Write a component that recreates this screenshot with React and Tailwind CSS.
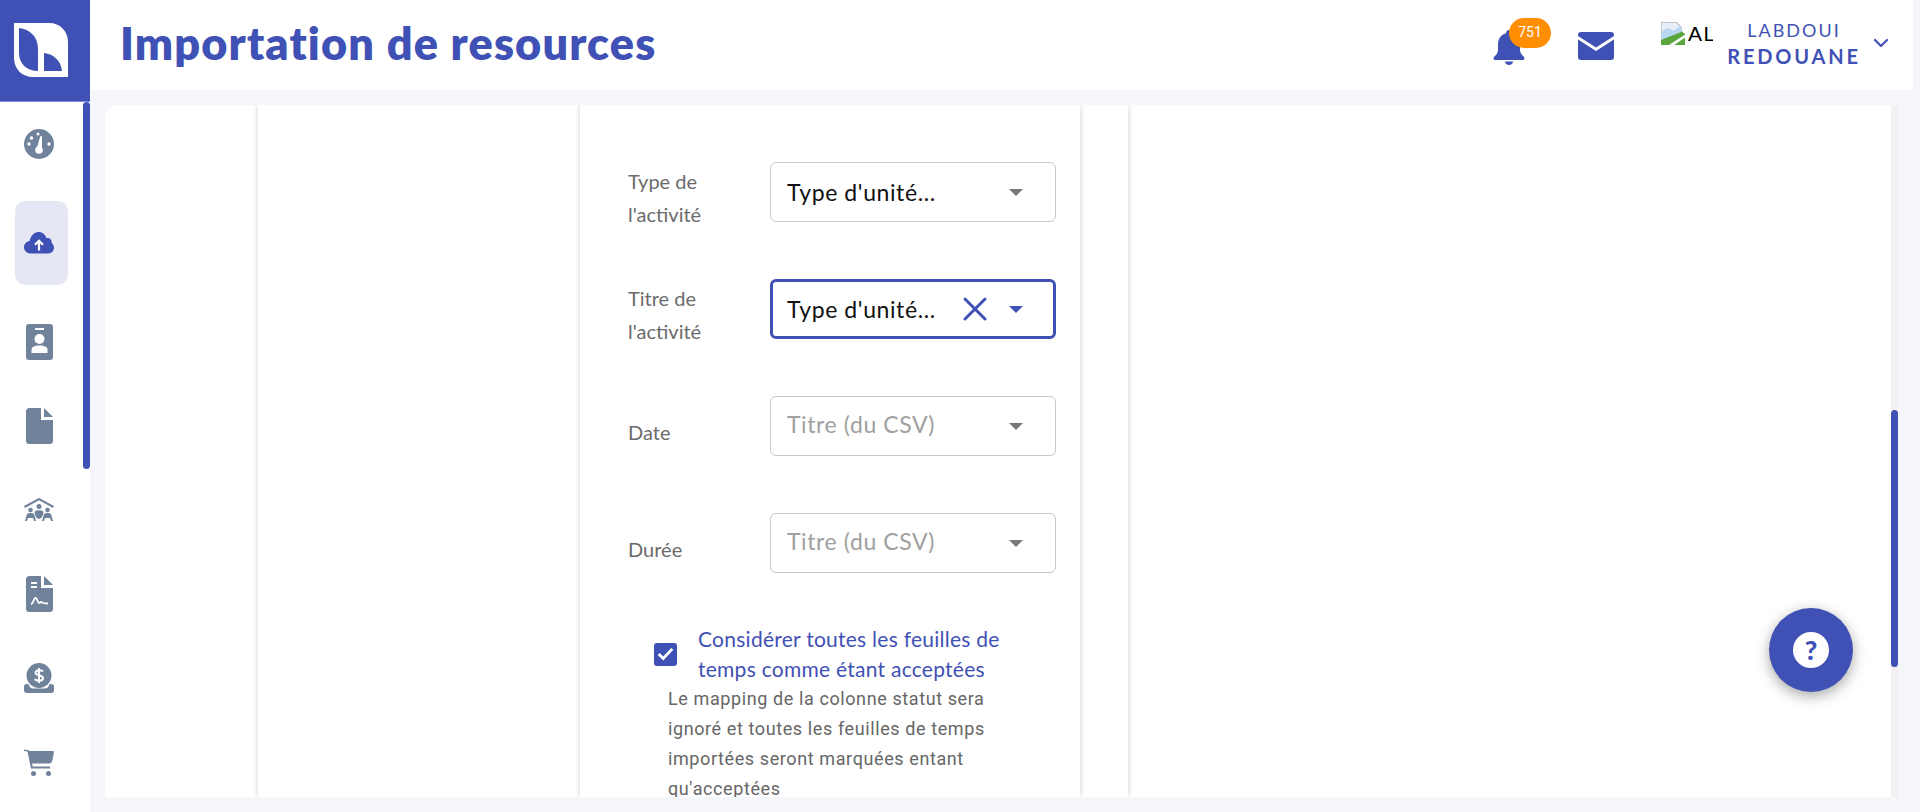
import { X, ChevronDown } from "lucide-react";

const Logo = () => (
  <svg width="54" height="54" viewBox="0 0 54 54">
    <path d="M0 0H35C46 0 54 8 54 19V54H19C8 54 0 46 0 35Z" fill="#fff" />
    <path d="M5 5C16 6 24 14 24 26V48C13 48 5 41 5 30Z" fill="#3f51b5" />
    <path d="M30 30C40 31 47 38 48 48H30Z" fill="#3f51b5" />
  </svg>
);

const GaugeIcon = () => (
  <svg width="30" height="30" viewBox="0 0 30 30">
    <circle cx="15" cy="15" r="15" fill="currentColor" />
    <circle cx="15" cy="21" r="3.800" fill="#fff" />
    <path d="M12.500 20L16.400 7L18 7.500L18 21Z" fill="#fff" />
    <circle cx="5" cy="15" r="1.700" fill="#fff" />
    <circle cx="7.500" cy="9" r="1.700" fill="#fff" />
    <circle cx="14" cy="5" r="1.500" fill="#fff" />
    <circle cx="25" cy="15" r="1.700" fill="#fff" />
  </svg>
);

const CloudIcon = () => (
  <svg width="30" height="22" viewBox="0 0 30 22">
    <path d="M7 21.500C3 21.500 0 18.800 0 15.200C0 12 2.400 9.400 5.600 9C6.600 4 10 0 14.500 0C18.500 0 21.500 2.600 22.600 6.200C23 6.100 23.400 6 24 6C26.800 6.400 28 8.600 27.600 11C29 12 30 13.600 30 15.600C30 19 27.600 21.500 24 21.500Z" fill="currentColor" />
    <path d="M15 18.500V9.500M11 12.800L15 8.800L19 12.800" stroke="#fff" strokeWidth="2.200" fill="none" />
  </svg>
);

const BadgeIcon = () => (
  <svg width="27" height="36" viewBox="0 0 27 36">
    <rect width="27" height="36" rx="3" fill="currentColor" />
    <rect x="9" y="4" width="9" height="2" fill="#fff" />
    <circle cx="13.500" cy="15" r="5" fill="#fff" />
    <path d="M5.500 29V26C5.500 23 8 21.500 13.500 21.500C19 21.500 21.500 23 21.500 26V29Z" fill="#fff" />
  </svg>
);

const FileIcon = () => (
  <svg width="27" height="36" viewBox="0 0 27 36">
    <path d="M3 0H15V12H27V33C27 35 25.500 36 24 36H3C1.500 36 0 35 0 33V3C0 1.500 1.500 0 3 0Z" fill="currentColor" />
    <path d="M18 0L27 9H18Z" fill="currentColor" />
  </svg>
);

const TeamIcon = () => (
  <svg width="30" height="24" viewBox="0 0 30 24">
    <path d="M0.500 9L15 1L29.500 9" stroke="currentColor" strokeWidth="2" fill="none" />
    <circle cx="15" cy="8.500" r="2.500" fill="currentColor" />
    <circle cx="6.500" cy="12" r="2.300" fill="currentColor" />
    <circle cx="23.500" cy="12" r="2.300" fill="currentColor" />
    <path d="M1 23L3 16C4 14.500 9 14.500 10 16L12 23H10L9 20H4L3 23Z" fill="currentColor" />
    <path d="M18 23L20 16C21 14.500 26 14.500 27 16L29 23H27L26 20H21L20 23Z" fill="currentColor" />
    <path d="M10.500 14C11 11.500 19 11.500 19.500 14C19 17 18.500 20 15 21C11.500 20 11 17 10.500 14Z" fill="currentColor" />
  </svg>
);

const ContractIcon = () => (
  <svg width="27" height="36" viewBox="0 0 27 36">
    <path d="M3 0H15V12H27V33C27 35 25.500 36 24 36H3C1.500 36 0 35 0 33V3C0 1.500 1.500 0 3 0Z" fill="currentColor" />
    <path d="M18 0L27 9H18Z" fill="currentColor" />
    <rect x="5" y="6" width="6" height="2" fill="#fff" />
    <rect x="5" y="10" width="6" height="2" fill="#fff" />
    <path d="M5 28C7.500 28 7.500 22 9.500 22C11.500 22 11.500 27 13 27C14.500 27 14.500 25 16 26.500C17.500 27.500 19 27.500 22 27.500" stroke="#fff" strokeWidth="1.800" fill="none" />
  </svg>
);

const MoneyIcon = () => (
  <svg width="30" height="30" viewBox="0 0 30 30">
    <circle cx="15" cy="12.500" r="12.500" fill="currentColor" />
    <path d="M3 21H4.500C5.500 24 7 25.500 9 25.500H21C23 25.500 24.500 24 25.500 21H27C29 21 30 22 30 23.500V27C30 29 29 30 27 30H3C1 30 0 29 0 27V23.500C0 22 1 21 3 21Z" fill="currentColor" />
    <path d="M19 8.500C18 6.800 12 6.500 11.500 9.500C11 13 19.500 11.500 19 15.500C18.500 18.500 12 18 11 16M15 5V20" stroke="#fff" strokeWidth="2" fill="none" />
  </svg>
);

const CartIcon = () => (
  <svg width="30" height="27" viewBox="0 0 30 27">
    <path d="M0 0.500L4.500 1.200L5.500 2H29C29.700 2 30 2.500 29.900 3.200L28.500 11C28 13.500 26.500 14.500 24.500 14.500H8L8.700 17.500H26V19.500H7L3.500 2.500L0 2Z" fill="currentColor" />
    <circle cx="9.500" cy="24.500" r="2.500" fill="currentColor" />
    <circle cx="24.500" cy="24.500" r="2.500" fill="currentColor" />
  </svg>
);

const navItems = [
  { icon: <GaugeIcon /> },
  { icon: <CloudIcon />, active: true },
  { icon: <BadgeIcon /> },
  { icon: <FileIcon /> },
  { icon: <TeamIcon /> },
  { icon: <ContractIcon /> },
  { icon: <MoneyIcon /> },
  { icon: <CartIcon /> },
];

const Sidebar = () => (
  <aside className="flex w-[90px] shrink-0 flex-col bg-white">
    <div className="flex h-[102px] shrink-0 items-center border-b border-[#7f8be0] bg-[#3f51b5] pb-[2px] pl-[14px]">
      <Logo />
    </div>
    <div className="flex flex-1 overflow-hidden">
      <nav className="flex w-[83px] flex-col items-start">
        {navItems.map((item, i) =>
          item.active ? (
            <div key={i} className="my-[15px] ml-[15px] flex h-[84px] w-[53px] shrink-0 items-center justify-start rounded-[10px] bg-[#e5e7f4] pl-[9px] text-[#3f51b5]">
              {item.icon}
            </div>
          ) : (
            <div key={i} className="flex h-[84px] w-[78px] shrink-0 items-center justify-center text-[#71839b]">
              {item.icon}
            </div>
          )
        )}
      </nav>
      <div className="h-[367px] w-[7px] rounded-full bg-[#3f51b5]" />
    </div>
  </aside>
);

const Header = () => (
  <header className="flex h-[90px] shrink-0 items-center bg-white pl-[30px] pr-[20px]">
    <h1 className="mb-[2px] font-['Lato','Noto_Sans',sans-serif] text-[45px] font-extrabold tracking-[1.150px] text-[#3f51b5]">
      Importation de resources
    </h1>
    <div className="ml-auto flex items-center">
      <div className="relative mr-[53px] mt-[4px] h-[35px] w-[32px]">
        <svg width="32" height="35" viewBox="0 0 32 35">
          <path d="M16 0C18 0 19 1.500 19 3.200C24 4.500 27 9 27 14V20C27 23 29 25 31 27C32 28 31.500 30 30 30H2C0.500 30 0 28 1 27C3 25 5 23 5 20V14C5 9 8 4.500 13 3.200C13 1.500 14 0 16 0Z" fill="#3f51b5" />
          <path d="M12 31.500H20C20 33.500 18 35 16 35C14 35 12 33.500 12 31.500Z" fill="#3f51b5" />
        </svg>
        <span className="absolute left-[16px] top-[-12px] flex h-[30px] w-[42px] items-center justify-center rounded-[15px] bg-[#ff8f00] font-['Roboto',sans-serif] text-[14px] text-white">
          751
        </span>
      </div>
      <svg className="mr-[47px] mt-[1px]" width="36" height="28" viewBox="0 0 36 28">
        <path d="M3 0H33C35 0 36 1 36 3V4L18 15.500L0 4V3C0 1 1 0 3 0Z" fill="#3f51b5" />
        <path d="M0 7.500L18 19L36 7.500V25C36 27 35 28 33 28H3C1 28 0 27 0 25Z" fill="#3f51b5" />
      </svg>
      <div className="mb-[24px] mr-[15px] flex w-[52px] items-center overflow-hidden">
        <svg className="shrink-0" width="25" height="23" viewBox="0 0 25 23">
          <path d="M0 0H15L20 5V12L0 20Z" fill="#e8eef8" stroke="#9aa0a6" strokeWidth="1" />
          <path d="M0 16C4 6 8 6 12 10C16 6 19 8 24 12V23H0Z" fill="#5aa63c" />
          <path d="M0 12C3 6 8 5 12 9L20 4V10L0 18Z" fill="#b8d7f2" />
          <path d="M8 23L25 12V15L13 23Z" fill="#fff" />
        </svg>
        <span className="ml-[2px] whitespace-nowrap font-['Liberation_Sans',sans-serif] text-[21px] leading-none tracking-[1.500px] text-black">ALT</span>
      </div>
      <div className="mb-[5px] flex w-[132px] flex-col items-center font-['Lato','Noto_Sans',sans-serif] text-[#3f51b5]">
        <span className="text-[18px] leading-[26px] tracking-[2px]">LABDOUI</span>
        <span className="text-[20px] font-bold leading-[26px] tracking-[2.800px]">REDOUANE</span>
      </div>
      <ChevronDown className="mb-[4px] ml-[9px] text-[#3f51b5]" size={24} strokeWidth={2.200} />
    </div>
  </header>
);

const Caret = ({ color }) => (
  <span className={`h-0 w-0 border-x-[7px] border-t-[7px] border-x-transparent ${color}`} />
);

const Select = ({ value, placeholder, focused }) => (
  <div
    className={`flex h-[60px] w-[286px] items-center rounded-[6px] bg-white ${
      focused ? "border-[3px] border-[#3f51b5] pl-[14px] pr-[30px]" : "border border-[#c8c8c8] pl-[16px] pr-[32px]"
    }`}
  >
    <span
      className={`min-w-0 flex-1 whitespace-nowrap font-['Lato','Noto_Sans',sans-serif] text-[23px] tracking-[0.600px] ${
        placeholder ? "mb-[3px] text-[#a0a0a0]" : "text-[#111111]"
      }`}
    >
      {value}
    </span>
    {focused && <X className="mr-[14px] shrink-0 text-[#3f51b5]" size={40} strokeWidth={1.800} />}
    <Caret color={focused ? "border-t-[#3f51b5]" : "border-t-[#777777]"} />
  </div>
);

const Field = ({ label, second, offset, ...rest }) => (
  <div className="flex h-[117px] items-start">
    <div className={`w-[142px] font-['Lato','Noto_Sans',sans-serif] text-[20px] leading-[33px] text-[#6b6b6b] ${offset}`}>
      {label}
      {second && <br />}
      {second}
    </div>
    <Select {...rest} />
  </div>
);

const Form = () => (
  <div className="ml-[322px] w-[500px] shrink-0 bg-white pl-[48px] pt-[57px] shadow-[0_0_6px_rgba(0,0,0,0.2)]">
    <Field label="Type de" second="l'activité" offset="pt-[3px]" value="Type d'unité..." />
    <Field label="Titre de" second="l'activité" offset="pt-[3px]" value="Type d'unité..." focused />
    <Field label="Date" offset="pt-[20px]" value="Titre (du CSV)" placeholder />
    <Field label="Durée" offset="pt-[20px]" value="Titre (du CSV)" placeholder />
    <div className="mt-[-6px] flex items-center pl-[26px]">
      <span className="mr-[21px] flex h-[23px] w-[23px] shrink-0 items-center justify-center rounded-[3px] bg-[#3f51b5]">
        <svg width="17" height="14" viewBox="0 0 15 12">
          <path d="M1.500 6L5.500 10L13.500 1.500" stroke="#fff" strokeWidth="2.500" fill="none" />
        </svg>
      </span>
      <p className="whitespace-nowrap font-['Lato','Noto_Sans',sans-serif] text-[21px] leading-[30px] tracking-[0.260px] text-[#3f51b5]">
        Considérer toutes les feuilles de
        <br />
        temps comme étant acceptées
      </p>
    </div>
    <p className="ml-[40px] whitespace-nowrap font-['Roboto',sans-serif] text-[18px] leading-[30px] tracking-[0.600px] text-[#666666]">
      Le mapping de la colonne statut sera
      <br />
      ignoré et toutes les feuilles de temps
      <br />
      importées seront marquées entant
      <br />
      qu'acceptées
    </p>
  </div>
);

const Content = () => (
  <main className="relative flex min-h-0 flex-1 p-[15px]">
    <div className="flex min-w-0 flex-1 overflow-hidden rounded-tl-[14px] bg-white">
      <div className="w-[153px] shrink-0" />
      <div className="flex w-[870px] shrink-0 bg-white shadow-[0_0_6px_rgba(0,0,0,0.2)]">
        <Form />
      </div>
    </div>
    <div className="relative w-[7px] shrink-0 bg-[#f1f1f1]">
      <div className="mt-[305px] h-[257px] w-[7px] rounded-full bg-[#3f51b5]" />
    </div>
    <button className="absolute left-[1679px] top-[518px] flex h-[84px] w-[84px] items-center justify-center rounded-full bg-[#3f51b5] shadow-[0_4px_14px_rgba(0,0,0,0.35)]">
      <span className="flex h-[36px] w-[36px] items-center justify-center rounded-full bg-white font-['Lato',sans-serif] text-[27px] font-black text-[#3f51b5]">
        ?
      </span>
    </button>
  </main>
);

export default function App() {
  return (
    <div className="flex h-screen overflow-hidden bg-[#f5f6fa]">
      <Sidebar />
      <div className="flex min-w-0 flex-1 flex-col">
        <div className="mr-[7px] flex shrink-0 flex-col">
          <Header />
        </div>
        <div className="flex min-h-0 flex-1 pr-[7px]">
          <Content />
        </div>
      </div>
    </div>
  );
}
